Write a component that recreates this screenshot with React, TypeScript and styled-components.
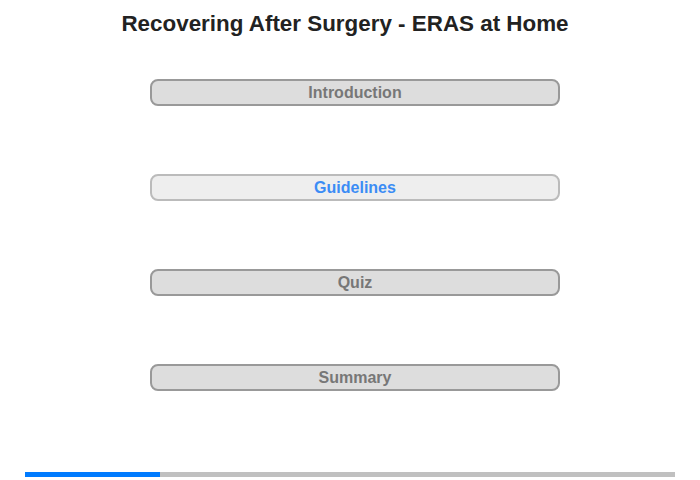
import React from "react";
import styled, { createGlobalStyle } from "styled-components";

const GlobalStyle = createGlobalStyle`
  html, body {
    margin: 0;
    padding: 0;
    background: #ffffff;
    font-family: "Liberation Sans", Arial, sans-serif;
  }
`;

const Page = styled.div`
  width: 700px;
  height: 480px;
  display: flex;
  flex-direction: column;
  box-sizing: border-box;
`;

const Title = styled.h1`
  margin: 0;
  padding: 11px 10px 0 0;
  height: 42px;
  box-sizing: border-box;
  font-size: 22.4px;
  font-weight: bold;
  color: #222222;
  text-align: center;
  line-height: 26px;
`;

const Menu = styled.nav`
  display: flex;
  flex-direction: column;
  gap: 68px;
  margin: 37px 0 0 150px;
`;

const MenuButton = styled.button<{ $active?: boolean }>`
  width: 410px;
  height: 27px;
  box-sizing: border-box;
  border: 2px solid ${(p) => (p.$active ? "#bbbbbb" : "#999999")};
  border-radius: 8px;
  background: ${(p) => (p.$active ? "#eeeeee" : "#dddddd")};
  color: ${(p) => (p.$active ? "#3b8cf5" : "#777777")};
  font-family: "Liberation Sans", Arial, sans-serif;
  font-size: 16px;
  font-weight: bold;
  padding: 0;
  line-height: 23px;
  cursor: pointer;
`;

const Progress = styled.div`
  margin: auto 25px 3px 25px;
  height: 5px;
  background: #c0c0c0;
  display: flex;
`;

const ProgressFill = styled.div`
  height: 100%;
  background: #007bff;
`;

const items = [
  { label: "Introduction" },
  { label: "Guidelines", active: true },
  { label: "Quiz" },
  { label: "Summary" },
];

const App = () => {
  const progress = 135 / 650;
  return (
    <Page>
      <GlobalStyle />
      <Title>Recovering After Surgery - ERAS at Home</Title>
      <Menu>
        {items.map((item) => (
          <MenuButton key={item.label} $active={item.active}>
            {item.label}
          </MenuButton>
        ))}
      </Menu>
      <Progress>
        <ProgressFill style={{ width: `${progress * 100}%` }} />
      </Progress>
    </Page>
  );
};

export default App;
